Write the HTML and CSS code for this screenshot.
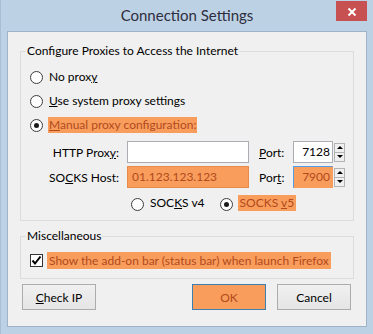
FILE: index.html
```html
<!DOCTYPE html>
<html>
<head>
<meta charset="utf-8">
<link rel="stylesheet" href="styles.css">
</head>
<body>
<div class="window">
  <div class="titlebar">
    <span class="title">Connection Settings</span>
    <span class="close"><svg width="31" height="20" viewBox="0 0 31 20"><path d="M12.5 7.5 L19.5 14.5 M19.5 7.5 L12.5 14.5" stroke="#fff" stroke-width="2" fill="none"/></svg></span>
  </div>
  <div class="client">
    <fieldset class="group proxies">
      <legend>Configure Proxies to Access the Internet</legend>
      <div class="opt"><span class="radio"></span><span>No prox<u>y</u></span></div>
      <div class="opt"><span class="radio"></span><span><u>U</u>se system proxy settings</span></div>
      <div class="opt"><span class="radio on"></span><span class="hl"><u>M</u>anual proxy configuration:</span></div>
      <div class="fields">
        <label class="lbl">HTTP Prox<u>y</u>:</label>
        <div class="input"></div>
        <label class="plbl"><u>P</u>ort:</label>
        <div class="port">
          <div class="input num">7128</div>
          <div class="spin"><span class="up"></span><span class="down"></span></div>
        </div>
        <label class="lbl">SO<u>C</u>KS Host:</label>
        <div class="input orange">01.123.123.123</div>
        <label class="plbl">Por<u>t</u>:</label>
        <div class="port">
          <div class="input num orange focus">7900</div>
          <div class="spin"><span class="up"></span><span class="down"></span></div>
        </div>
      </div>
      <div class="socks">
        <span class="radio"></span><span class="v4">SOC<u>K</u>S v4</span>
        <span class="radio on"></span><span class="hl">SOCKS <u>v</u>5</span>
      </div>
    </fieldset>
    <fieldset class="group misc">
      <legend>Miscellaneous</legend>
      <div class="opt check-row"><span class="check"><svg width="11" height="11" viewBox="0 0 11 11"><path d="M1.5 5.5 L4 8.5 L9.5 1.5" stroke="#000" stroke-width="2" fill="none"/></svg></span><span class="hl">Show the add-on bar (status bar) when launch Firefox</span></div>
    </fieldset>
    <div class="buttons">
      <button class="btn"><u>C</u>heck IP</button>
      <span class="spacer"></span>
      <button class="btn ok">OK</button>
      <button class="btn">Cancel</button>
    </div>
  </div>
</div>
</body>
</html>
```
FILE: styles.css
```css
* { box-sizing: border-box; }
html, body { margin: 0; padding: 0; }
body {
  font-family: Lato, "Noto Sans", sans-serif;
  font-size: 12px;
  color: #000;
  background: #bcd0e4;
}
.window {
  width: 373px;
  height: 334px;
  background: #bdd1e5;
  border-left: 1px solid #a9bed2;
  padding: 0 6px 7px 6px;
  display: flex;
  flex-direction: column;
}
.titlebar {
  height: 31px;
  display: flex;
  align-items: flex-start;
  padding-left: 31px;
}
.title {
  flex: 1;
  text-align: center;
  font-size: 15px;
  line-height: 31px;
  color: #2e2e3e;
}
.close {
  width: 31px;
  height: 20px;
  margin-top: 1px;
  margin-right: 0;
  background: #c75050;
  display: block;
}
.close svg { display: block; }
.client {
  flex: 1;
  background: #f0f0f0;
  border: 1px solid #9fb3c8;
  display: flex;
  flex-direction: column;
}
.group {
  margin: 0 12px;
  border: 1px solid #dcdcdc;
  padding: 0;
  min-width: 0;
}
.group legend {
  margin-left: 5px;
  padding: 0 1px;
  line-height: 16px;
}
.proxies { margin-top: 11px; padding-top: 10px; padding-bottom: 9px; }
.opt {
  display: flex;
  align-items: flex-start;
  height: 16px;
  line-height: 16px;
  margin-left: 9px;
  margin-bottom: 8px;
}
.opt .radio { margin-right: 6px; }
.radio {
  width: 13px;
  height: 13px;
  margin-top: 2px;
  border: 1px solid #3c3c3c;
  border-radius: 50%;
  background: #fff;
  display: inline-flex;
  align-items: center;
  justify-content: center;
  flex: none;
}
.radio.on::after {
  content: "";
  width: 5px;
  height: 5px;
  border-radius: 50%;
  background: #1a1a1a;
}
.hl {
  background: #f99d5c;
  color: #b24a1c;
  padding: 0 1px;
  margin-left: -1px;
}
.fields {
  display: grid;
  grid-template-columns: 98px 122px 34px auto;
  grid-auto-rows: 22px;
  column-gap: 8px;
  row-gap: 3px;
  margin-top: 2px;
  align-items: center;
}
.fields .plbl { margin-left: 2px; }
.lbl { text-align: right; }
.input {
  height: 22px;
  border: 1px solid #abadb3;
  background: #fff;
  line-height: 20px;
  padding: 0 4px;
  font-size: 12px;
  white-space: nowrap;
  overflow: hidden;
}
.input.orange {
  background: #f99d5c;
  border-color: #e98a4c;
  color: #b24a1c;
}
.input.focus { border-color: #569de5; border-right-color: #f99d5c; border-bottom-color: #f99d5c; }
.num { text-align: right; padding: 0 2px 0 0; width: 40px; }
.port {
  display: flex;
  align-items: center;
  margin-left: -6px;
}
.spin {
  display: flex;
  flex-direction: column;
  width: 11px;
  height: 19px;
  margin-left: 1px;
}
.spin span {
  flex: 1;
  border: 1px solid #b4b4b4;
  background: #f0f0f0;
  display: flex;
  align-items: center;
  justify-content: center;
}
.spin span + span { border-top: none; }
.spin .up::after {
  content: "";
  border-left: 3px solid transparent;
  border-right: 3px solid transparent;
  border-bottom: 3px solid #000;
}
.spin .down::after {
  content: "";
  border-left: 3px solid transparent;
  border-right: 3px solid transparent;
  border-top: 3px solid #000;
}
.socks {
  display: flex;
  align-items: flex-start;
  height: 16px;
  line-height: 16px;
  margin-top: 7px;
  margin-left: 110px;
}
.socks .radio { margin-right: 6px; margin-top: 3px; }
.socks .v4 { margin-right: 15px; }
.socks .hl { padding: 0 2px; margin-left: -1px; }
.misc { margin-top: 7px; padding-top: 8px; padding-bottom: 9px; }
.check-row { margin-bottom: 0; height: 17px; line-height: 17px; }
.check {
  width: 13px;
  height: 13px;
  margin-top: 2px;
  margin-right: 4px;
  border: 1px solid #333;
  background: #fff;
  display: flex;
  align-items: center;
  justify-content: center;
  flex: none;
}
.check svg { display: block; }
.check-row .hl { padding: 0 2px; margin-left: 0; }
.buttons {
  display: flex;
  margin: 5px 15px 0 14px;
}
.spacer { flex: 1; }
.btn {
  width: 74px;
  height: 26px;
  border: 1px solid #acacac;
  background: linear-gradient(#f0f0f0, #e5e5e5);
  font-family: Lato, "Noto Sans", sans-serif;
  font-size: 12px;
  color: #000;
  padding: 0;
}
.btn.ok {
  width: 74px;
  margin-right: 11px;
  background: #f99d5c;
  border-color: #3c7fb1;
  color: #b24a1c;
}
```
